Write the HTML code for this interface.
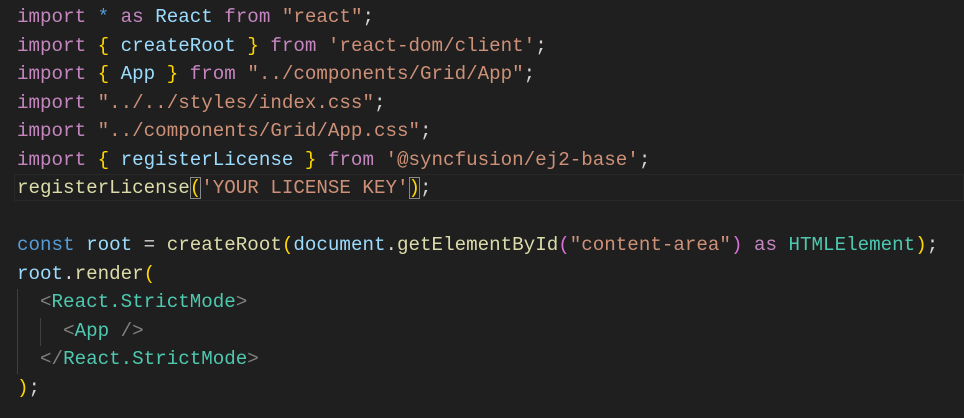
<!DOCTYPE html>
<html><head><style>
body{margin:0;background:#1f1f1f;width:964px;height:418px;overflow:hidden;}
.c{position:absolute;left:17px;top:3px;font-family:"Liberation Mono",monospace;font-size:19.2px;line-height:28.5px;color:#d4d4d4;}
.l{height:28.5px;position:relative;white-space:pre}
.k{color:#c586c0}.v{color:#9cdcfe}.b{color:#569cd6}.s{color:#ce9178}.f{color:#dcdcaa}.y{color:#ffd700}.p{color:#da70d6}.t{color:#4ec9b0}.g{color:#808080}
.hl{position:absolute;left:14px;top:174px;width:950px;height:27px;border:1px solid #282828;box-sizing:border-box}
.bx{outline:1px solid #888;outline-offset:-1px}
.ig{position:absolute;width:1px;background:#404040}
</style></head><body>
<div class="hl"></div>
<div class="ig" style="left:17px;top:289px;height:85px"></div>
<div class="ig" style="left:40px;top:318px;height:28px"></div>
<div class="c"><div class="l"><span class="k">import</span> <span class="b">*</span> <span class="k">as</span> <span class="v">React</span> <span class="k">from</span> <span class="s">"react"</span>;</div><div class="l"><span class="k">import</span> <span class="y">{</span> <span class="v">createRoot</span> <span class="y">}</span> <span class="k">from</span> <span class="s">'react-dom/client'</span>;</div><div class="l"><span class="k">import</span> <span class="y">{</span> <span class="v">App</span> <span class="y">}</span> <span class="k">from</span> <span class="s">"../components/Grid/App"</span>;</div><div class="l"><span class="k">import</span> <span class="s">"../../styles/index.css"</span>;</div><div class="l"><span class="k">import</span> <span class="s">"../components/Grid/App.css"</span>;</div><div class="l"><span class="k">import</span> <span class="y">{</span> <span class="v">registerLicense</span> <span class="y">}</span> <span class="k">from</span> <span class="s">'@syncfusion/ej2-base'</span>;</div><div class="l"><span class="f">registerLicense</span><span class="y bx">(</span><span class="s">'YOUR LICENSE KEY'</span><span class="y bx">)</span>;</div><div class="l"> </div><div class="l"><span class="b">const</span> <span class="v">root</span> = <span class="f">createRoot</span><span class="y">(</span><span class="v">document</span>.<span class="f">getElementById</span><span class="p">(</span><span class="s">"content-area"</span><span class="p">)</span> <span class="k">as</span> <span class="t">HTMLElement</span><span class="y">)</span>;</div><div class="l"><span class="v">root</span>.<span class="f">render</span><span class="y">(</span></div><div class="l">  <span class="g">&lt;</span><span class="t">React.StrictMode</span><span class="g">&gt;</span></div><div class="l">    <span class="g">&lt;</span><span class="t">App</span> <span class="g">/&gt;</span></div><div class="l">  <span class="g">&lt;/</span><span class="t">React.StrictMode</span><span class="g">&gt;</span></div><div class="l"><span class="y">)</span>;</div></div>
</body></html>
